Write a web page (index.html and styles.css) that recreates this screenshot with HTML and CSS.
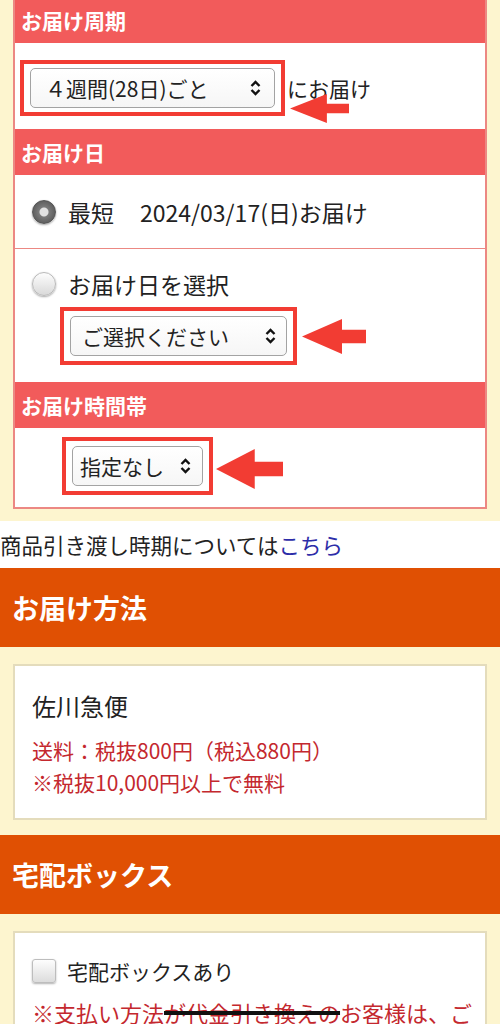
FILE: index.html
```html
<!DOCTYPE html>
<html lang="ja">
<head>
  <meta charset="UTF-8">
  <title>お届け設定</title>
  <link rel="stylesheet" href="styles.css">
</head>
<body>
  <div class="schedule-wrap">
    <div class="schedule">
      <div class="sec-head">お届け周期</div>
      <div class="row row-cycle">
        <span class="mark">
          <span class="select sel-cycle">
            <span>４週間(28日)ごと</span>
            <svg class="chev" width="13" height="18" viewBox="0 0 13 18"><path d="M2.5 7 L6.5 3 L10.5 7 M2.5 11 L6.5 15 L10.5 11" fill="none" stroke="#111" stroke-width="2.4"/></svg>
          </span>
        </span>
        <span class="after-text">にお届け</span>
        <svg class="arrow arrow-cycle" width="59" height="29" viewBox="0 0 64 36" preserveAspectRatio="none"><polygon points="0,18 40,0 40,12 64,12 64,24 40,24 40,36" fill="#f23c33"/></svg>
      </div>

      <div class="sec-head">お届け日</div>
      <div class="row row-quick">
        <span class="radio checked"></span>
        <span class="radio-label">最短</span>
        <span class="quick-date">2024/03/17(日)お届け</span>
      </div>
      <div class="row row-pick">
        <div class="radio-line">
          <span class="radio"></span>
          <span class="radio-label">お届け日を選択</span>
        </div>
        <div class="select-line">
          <span class="mark">
            <span class="select sel-date">
              <span>ご選択ください</span>
              <svg class="chev" width="13" height="18" viewBox="0 0 13 18"><path d="M2.5 7 L6.5 3 L10.5 7 M2.5 11 L6.5 15 L10.5 11" fill="none" stroke="#111" stroke-width="2.4"/></svg>
            </span>
          </span>
          <svg class="arrow arrow-date" width="64" height="35" viewBox="0 0 64 36" preserveAspectRatio="none"><polygon points="0,18 40,0 40,11 64,11 64,25 40,25 40,36" fill="#f23c33"/></svg>
        </div>
      </div>

      <div class="sec-head">お届け時間帯</div>
      <div class="row row-time">
        <span class="mark">
          <span class="select sel-time">
            <span>指定なし</span>
            <svg class="chev" width="13" height="18" viewBox="0 0 13 18"><path d="M2.5 7 L6.5 3 L10.5 7 M2.5 11 L6.5 15 L10.5 11" fill="none" stroke="#111" stroke-width="2.4"/></svg>
          </span>
        </span>
        <svg class="arrow arrow-time" width="67" height="40" viewBox="0 0 64 36" preserveAspectRatio="none"><polygon points="0,18 37,0 37,11.5 64,11.5 64,24.5 37,24.5 37,36" fill="#f23c33"/></svg>
      </div>
    </div>
  </div>

  <p class="handover">商品引き渡し時期については<a href="#">こちら</a></p>

  <h2 class="block-head">お届け方法</h2>
  <div class="block-wrap">
    <div class="card">
      <div class="carrier">佐川急便</div>
      <div class="note">送料：税抜800円（税込880円）</div>
      <div class="note">※税抜10,000円以上で無料</div>
    </div>
  </div>

  <h2 class="block-head">宅配ボックス</h2>
  <div class="block-wrap">
    <div class="card card-box">
      <label class="check-line">
        <span class="checkbox"></span>
        <span>宅配ボックスあり</span>
      </label>
      <div class="note note-cod">※支払い方法<span class="scribble">が代金引き換えの</span>お客様は、ご</div>
    </div>
  </div>
</body>
</html>
```

FILE: styles.css
```css
body {
  margin: 0;
  font-family: "Noto Sans CJK JP", "Noto Sans", sans-serif;
  color: #222;
  background: #fff;
}

/* お届けスケジュール */
.schedule-wrap {
  background: #fdf5cf;
  padding: 0 13px 12px;
  margin-top: -3px;
}

.schedule {
  background: #fff;
  border: 2px solid #ec8883;
  border-top: none;
}

.sec-head {
  background: #f25b5b;
  color: #fff;
  font-weight: bold;
  font-size: 21px;
  height: 46px;
  line-height: 46px;
  padding-left: 6px;
}

.row {
  display: flex;
  align-items: center;
}

.row-cycle {
  position: relative;
  padding: 17px 5px 13px;
}

.mark {
  display: inline-flex;
  border: 4px solid #f23c33;
  padding: 4px 6px;
}

.select {
  display: flex;
  align-items: center;
  justify-content: space-between;
  height: 40px;
  box-sizing: border-box;
  border: 1.5px solid #a3a3a3;
  border-radius: 5px;
  background: linear-gradient(#fff, #f6f6f6);
  font-size: 21px;
  color: #222;
}

.sel-cycle {
  width: 245px;
  padding: 0 12px 0 14px;
}

.sel-date {
  width: 217px;
  padding: 0 9px 0 11px;
}

.sel-time {
  width: 131px;
  padding: 0 10px 0 7px;
}

.after-text {
  font-size: 21px;
  margin-left: 2px;
}

.arrow-cycle {
  position: absolute;
  left: 275px;
  top: 51px;
}

.row-quick {
  height: 73px;
  padding: 0 17px;
  border-bottom: 1px solid #ec8883;
}

.radio {
  width: 24px;
  height: 24px;
  box-sizing: border-box;
  border-radius: 50%;
  border: 1px solid #b9b9b9;
  background: linear-gradient(#fdfdfd, #d9d9d9);
  box-shadow: 0 1px 2px rgba(0, 0, 0, 0.35);
  flex-shrink: 0;
}

.radio.checked {
  border-color: #555;
  background: radial-gradient(circle, #e2e2e2 0 4px, #7a7a7a 5px, #4c4c4c 100%);
}

.radio-label {
  font-size: 23px;
  margin-left: 12px;
}

.quick-date {
  font-size: 23px;
  margin-left: 26px;
}

.row-pick {
  flex-direction: column;
  align-items: flex-start;
  padding: 19px 17px 17px;
}

.radio-line {
  display: flex;
  align-items: center;
  height: 32px;
}

.select-line {
  display: flex;
  align-items: center;
  margin: 7px 0 0 28px;
}

.select-line .mark {
  padding: 5px 6px;
}

.arrow-date {
  margin-left: 5px;
}

.row-time {
  padding: 9px 0 12px 47px;
}

.row-time .mark {
  padding: 5px 6px;
}

.arrow-time {
  margin-left: 3px;
  margin-top: 6px;
}

.handover {
  margin: 0;
  height: 47px;
  line-height: 47px;
  font-size: 21.5px;
}

.handover a {
  color: #2d2da8;
  text-decoration: none;
}

/* お届け方法・宅配ボックス */
.block-head {
  margin: 0;
  background: #e05003;
  color: #fff;
  font-size: 27px;
  font-weight: bold;
  height: 79px;
  line-height: 79px;
  padding-left: 12px;
}

.block-wrap {
  background: #fdf5cf;
  padding: 17px 13px 15px;
}

.card {
  background: #fff;
  border: 2px solid #e4dcbc;
  padding: 23px 17px 20px;
}

.carrier {
  font-size: 24px;
  line-height: 34px;
  margin-bottom: 11px;
}

.note {
  color: #c4282e;
  font-size: 21px;
  line-height: 32px;
}

.card-box {
  padding-top: 21px;
  min-height: 120px;
}

.check-line {
  display: flex;
  align-items: center;
  height: 34px;
  font-size: 21px;
}

.checkbox {
  width: 24px;
  height: 24px;
  box-sizing: border-box;
  border: 1px solid #bdbdbd;
  border-radius: 3px;
  background: linear-gradient(#fdfdfd, #dcdcdc);
  box-shadow: 0 1px 2px rgba(0, 0, 0, 0.3);
  margin-right: 11px;
}

.note-cod {
  font-size: 22px;
  margin-top: 8px;
  white-space: nowrap;
}

.scribble {
  text-decoration: line-through;
  text-decoration-color: #111;
  text-decoration-thickness: 4px;
}
```
